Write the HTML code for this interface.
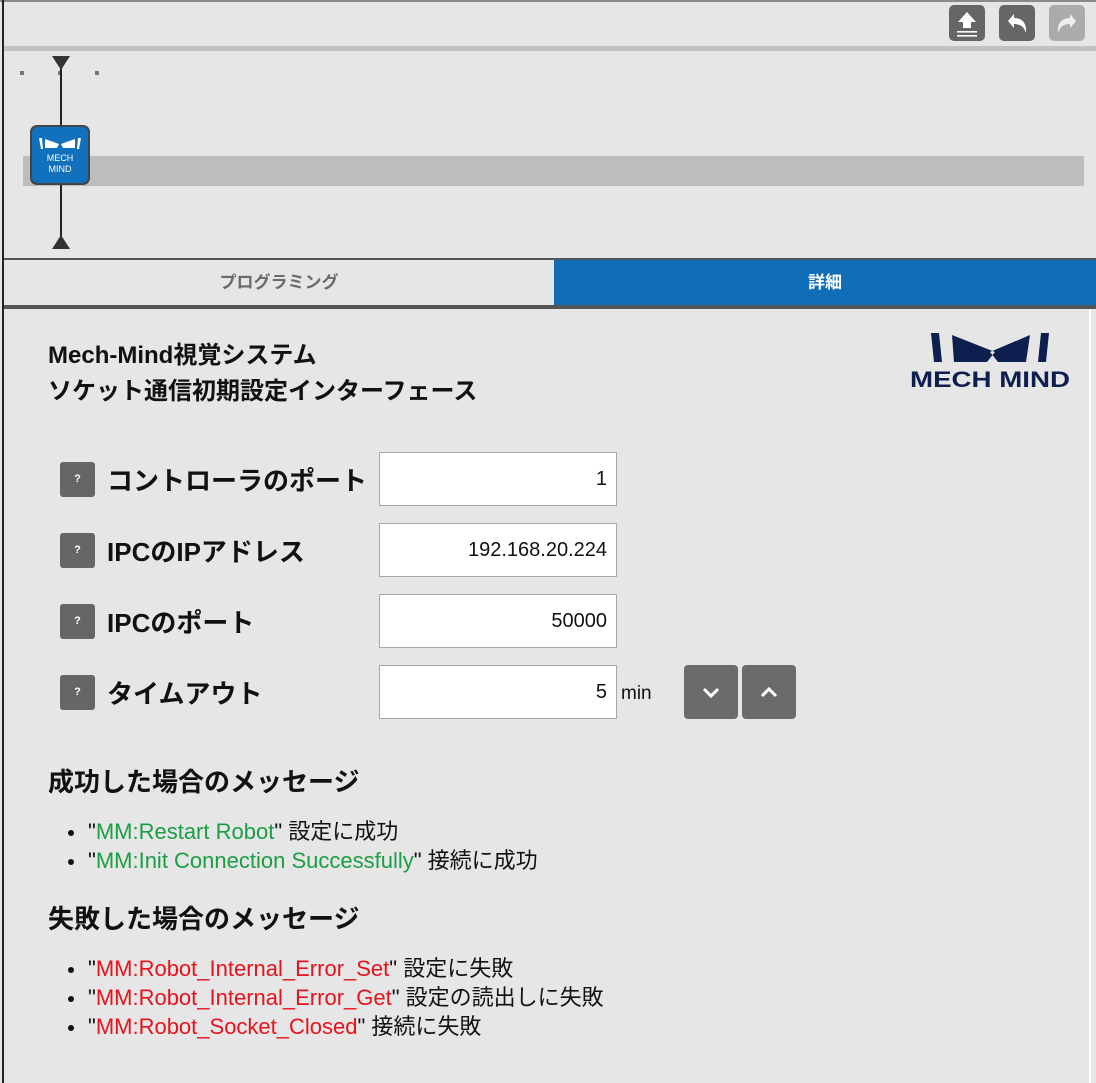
<!DOCTYPE html>
<html><head><meta charset="utf-8">
<style>
*{margin:0;padding:0;box-sizing:border-box}
body{width:1096px;height:1083px;background:#e6e6e6;position:relative;overflow:hidden;font-family:"Liberation Sans","Noto Sans CJK JP",sans-serif;color:#111}
.a{position:absolute}
.tb{position:absolute;top:5px;width:36px;height:36px;border-radius:5px;background:#666}
.q{position:absolute;left:60px;width:35px;height:35px;background:#666;border-radius:3px;color:#fff;font-size:11px;font-weight:bold;text-align:center;line-height:35px}
.lb{position:absolute;left:107px;font-size:26px;font-weight:bold;line-height:30px}
.in{position:absolute;left:379px;width:238px;height:54px;background:#fff;border:1px solid #a8a8a8;text-align:right;padding-right:9px;font-size:20px;line-height:52px}
.h{position:absolute;left:48px;font-size:26px;font-weight:bold}
.li{position:absolute;left:70px;font-size:22px;line-height:24px;white-space:nowrap}
.li:before{content:"";position:absolute;left:-2px;top:10px;width:6px;height:6px;border-radius:50%;background:#111}
.li span.t{margin-left:18px}
.g{color:#1a9e44}.r{color:#e8121c}
.sb{position:absolute;top:665px;width:54px;height:54px;background:#6b6b6b;border-radius:4px}
</style></head><body>
<div class="a" style="left:0;top:0;width:1096px;height:2px;background:#8a8a8a"></div>
<div class="a" style="left:2px;top:0;width:2px;height:1083px;background:#222"></div>
<div class="tb" style="left:949px"><svg width="36" height="36"><path d="M18 7 L27 17 H22 V23 H14 V17 H9 Z" fill="#fff"/><rect x="8" y="26" width="20" height="1.6" fill="#fff"/><rect x="8" y="30" width="20" height="1.6" fill="#fff"/></svg></div>
<div class="tb" style="left:999px"><svg width="36" height="36"><path d="M9 16 L15 9 V13 C23 13 28 18 27 28 C25 22 22 19 15 19 V23 Z" fill="#fff"/></svg></div>
<div class="tb" style="left:1049px;background:#ababab"><svg width="36" height="36"><path d="M27 16 L21 9 V13 C13 13 8 18 9 28 C11 22 14 19 21 19 V23 Z" fill="#eee"/></svg></div>
<div class="a" style="left:4px;top:46px;width:1092px;height:5px;background:#c2c2c2"></div>
<div class="a" style="left:20px;top:71px;width:4px;height:4px;background:#777"></div>
<div class="a" style="left:58px;top:71px;width:4px;height:4px;background:#777"></div>
<div class="a" style="left:95px;top:71px;width:4px;height:4px;background:#777"></div>
<div class="a" style="left:23px;top:156px;width:1061px;height:30px;background:#bdbdbd"></div>
<div class="a" style="left:60px;top:60px;width:2px;height:180px;background:#222"></div>
<svg class="a" style="left:52px;top:56px" width="18" height="14"><path d="M0 0H18L9 14Z" fill="#333"/></svg>
<svg class="a" style="left:52px;top:235px" width="18" height="14"><path d="M9 0L18 14H0Z" fill="#333"/></svg>
<div class="a" style="left:30px;top:125px;width:60px;height:60px;background:#1271bd;border:2px solid #444;border-radius:7px;color:#fff;text-align:center;font-size:9px;line-height:11px;padding-top:26px">
<svg class="a" style="left:5px;top:11px" width="46" height="14"><path d="M2 0 H5 L6 11 H4Z M8 1 L22 6 L20 10 L8 10Z M38 1 L24 6 L26 10 L38 10Z M44 0 H41 L40 11 H42Z" fill="#fff"/></svg>
MECH<br>MIND</div>
<div class="a" style="left:4px;top:258px;width:1092px;height:2px;background:#555"></div>
<div class="a" style="left:4px;top:260px;width:550px;height:46px;text-align:center;line-height:46px;font-size:17px;font-weight:bold;color:#6a6a6a">プログラミング</div>
<div class="a" style="left:554px;top:260px;width:542px;height:46px;background:#106eb8;text-align:center;line-height:46px;font-size:17px;font-weight:bold;color:#fff">詳細</div>
<div class="a" style="left:4px;top:305px;width:1092px;height:4px;background:#555"></div>
<div class="a" style="left:1089px;top:309px;width:2px;height:774px;background:#fff"></div>
<div class="a" style="left:48px;top:338px;font-size:24px;font-weight:bold;line-height:36px;white-space:nowrap">Mech-Mind視覚システム<br>ソケット通信初期設定インターフェース</div>
<svg class="a" style="left:910px;top:332px" width="162" height="58"><path d="M21 1 H29 L32 30 H24Z M42 3 L85 20 L77 30 H44Z M139 1 H131 L128 30 H136Z M120 3 L80 20 L88 30 H116Z" fill="#0d1f4e"/><text x="0" y="55" font-family="Liberation Sans,sans-serif" font-size="22" font-weight="bold" fill="#0d1f4e" textLength="160" lengthAdjust="spacingAndGlyphs">MECH MIND</text></svg>
<div class="q" style="top:462px">?</div><div class="lb" style="top:466px">コントローラのポート</div><div class="in" style="top:452px">1</div>
<div class="q" style="top:533px">?</div><div class="lb" style="top:537px">IPCのIPアドレス</div><div class="in" style="top:523px">192.168.20.224</div>
<div class="q" style="top:604px">?</div><div class="lb" style="top:608px">IPCのポート</div><div class="in" style="top:594px">50000</div>
<div class="q" style="top:675px">?</div><div class="lb" style="top:679px">タイムアウト</div><div class="in" style="top:665px">5</div>
<div class="a" style="left:621px;top:683px;font-size:19px">min</div>
<div class="sb" style="left:684px"><svg width="54" height="54"><path d="M20 24 L27 31 L34 24" stroke="#fff" stroke-width="3" fill="none"/></svg></div>
<div class="sb" style="left:742px"><svg width="54" height="54"><path d="M20 31 L27 24 L34 31" stroke="#fff" stroke-width="3" fill="none"/></svg></div>
<div class="h" style="top:762px">成功した場合のメッセージ</div>
<div class="li" style="top:820px"><span class="t">"<span class="g">MM:Restart Robot</span>" 設定に成功</span></div>
<div class="li" style="top:849px"><span class="t">"<span class="g">MM:Init Connection Successfully</span>" 接続に成功</span></div>
<div class="h" style="top:899px">失敗した場合のメッセージ</div>
<div class="li" style="top:957px"><span class="t">"<span class="r">MM:Robot_Internal_Error_Set</span>" 設定に失敗</span></div>
<div class="li" style="top:986px"><span class="t">"<span class="r">MM:Robot_Internal_Error_Get</span>" 設定の読出しに失敗</span></div>
<div class="li" style="top:1015px"><span class="t">"<span class="r">MM:Robot_Socket_Closed</span>" 接続に失敗</span></div>
</body></html>
